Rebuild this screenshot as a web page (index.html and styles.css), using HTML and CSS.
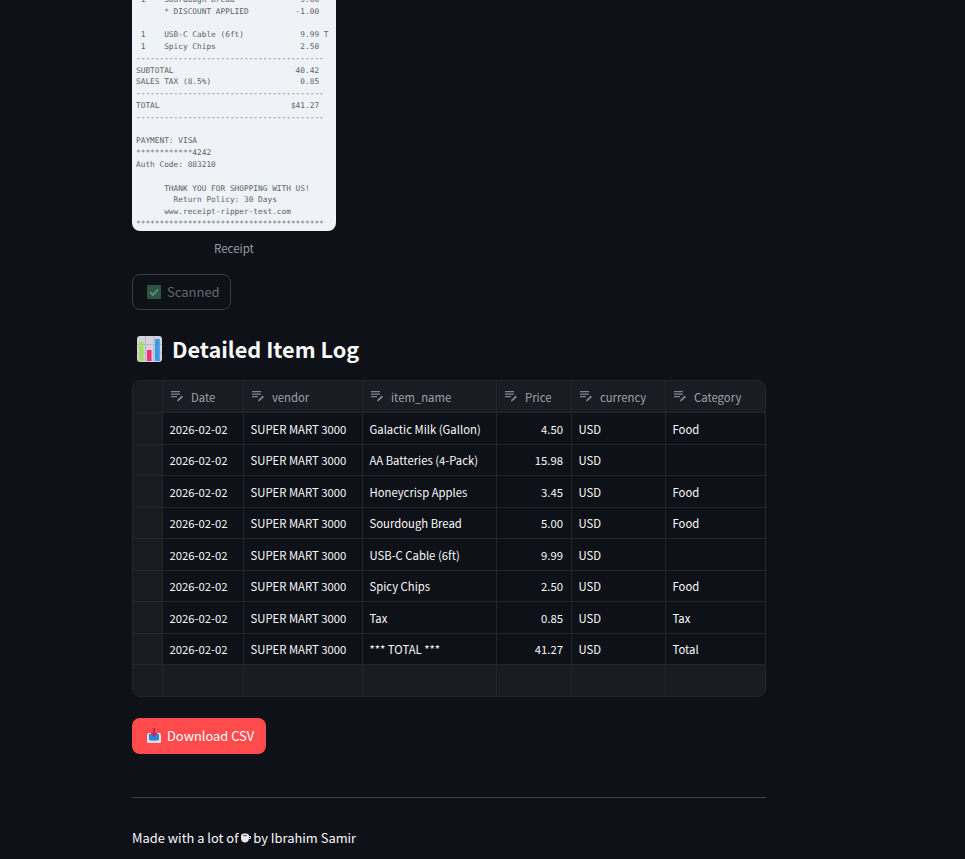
FILE: index.html
```html
<!DOCTYPE html>
<html lang="en">
<head>
<meta charset="utf-8">
<title>Receipt Ripper</title>
<link rel="stylesheet" href="styles.css">
</head>
<body>
<main class="page">
  <figure class="receipt">
    <div class="paper">
<pre class="paper-text"> 1    Sourdough Bread              5.00
      * DISCOUNT APPLIED          -1.00

 1    USB-C Cable (6ft)            9.99 T
 1    Spicy Chips                  2.50
----------------------------------------
SUBTOTAL                          40.42
SALES TAX (8.5%)                   0.85
----------------------------------------
TOTAL                            $41.27
----------------------------------------

PAYMENT: VISA
************4242
Auth Code: 883210

      THANK YOU FOR SHOPPING WITH US!
        Return Policy: 30 Days
      www.receipt-ripper-test.com
****************************************</pre>
    </div>
    <figcaption class="caption">Receipt</figcaption>
  </figure>

  <button class="btn-scanned" disabled>
    <svg class="check" viewBox="0 0 14 14" aria-hidden="true"><rect width="14" height="14" rx="1" fill="#2a5542"/><path d="M3 7.200 5.900 10 11 4.400" fill="none" stroke="#6f8c7e" stroke-width="1.600"/></svg>
    <span>Scanned</span>
  </button>

  <h2 class="heading">
    <svg class="chart" viewBox="0 0 25 26" aria-hidden="true">
      <rect width="25" height="26" rx="3" fill="#d5d2dc"/>
      <path d="M0 8.500h25M0 17h25M8.500 0v26M17 0v26" stroke="#b3b0bc" stroke-width=".8"/>
      <path d="M2 25V6h4.500v19z" fill="#a5e05a"/>
      <path d="M10 25V14h4.500v11z" fill="#ee2f78"/>
      <path d="M18 25V3h4.800v22z" fill="#3d9bee"/>
    </svg>
    <span>Detailed Item Log</span>
  </h2>

  <div class="table">
    <div class="cell head idx"></div>
    <div class="cell head"><svg class="edit"><use href="#pen"/></svg>Date</div>
    <div class="cell head"><svg class="edit"><use href="#pen"/></svg>vendor</div>
    <div class="cell head"><svg class="edit"><use href="#pen"/></svg>item_name</div>
    <div class="cell head"><svg class="edit"><use href="#pen"/></svg>Price</div>
    <div class="cell head"><svg class="edit"><use href="#pen"/></svg>currency</div>
    <div class="cell head last"><svg class="edit"><use href="#pen"/></svg>Category</div>

    <div class="cell idx"></div><div class="cell">2026-02-02</div><div class="cell">SUPER MART 3000</div><div class="cell">Galactic Milk (Gallon)</div><div class="cell num">4.50</div><div class="cell">USD</div><div class="cell last">Food</div>
    <div class="cell idx"></div><div class="cell">2026-02-02</div><div class="cell">SUPER MART 3000</div><div class="cell">AA Batteries (4-Pack)</div><div class="cell num">15.98</div><div class="cell">USD</div><div class="cell last"></div>
    <div class="cell idx"></div><div class="cell">2026-02-02</div><div class="cell">SUPER MART 3000</div><div class="cell">Honeycrisp Apples</div><div class="cell num">3.45</div><div class="cell">USD</div><div class="cell last">Food</div>
    <div class="cell idx"></div><div class="cell">2026-02-02</div><div class="cell">SUPER MART 3000</div><div class="cell">Sourdough Bread</div><div class="cell num">5.00</div><div class="cell">USD</div><div class="cell last">Food</div>
    <div class="cell idx"></div><div class="cell">2026-02-02</div><div class="cell">SUPER MART 3000</div><div class="cell">USB-C Cable (6ft)</div><div class="cell num">9.99</div><div class="cell">USD</div><div class="cell last"></div>
    <div class="cell idx"></div><div class="cell">2026-02-02</div><div class="cell">SUPER MART 3000</div><div class="cell">Spicy Chips</div><div class="cell num">2.50</div><div class="cell">USD</div><div class="cell last">Food</div>
    <div class="cell idx"></div><div class="cell">2026-02-02</div><div class="cell">SUPER MART 3000</div><div class="cell">Tax</div><div class="cell num">0.85</div><div class="cell">USD</div><div class="cell last">Tax</div>
    <div class="cell idx"></div><div class="cell">2026-02-02</div><div class="cell">SUPER MART 3000</div><div class="cell">*** TOTAL ***</div><div class="cell num">41.27</div><div class="cell">USD</div><div class="cell last">Total</div>

    <div class="cell add idx"></div><div class="cell add"></div><div class="cell add"></div><div class="cell add"></div><div class="cell add"></div><div class="cell add"></div><div class="cell add last"></div>
  </div>

  <button class="btn-download">
    <svg class="inbox" viewBox="0 0 14 15" aria-hidden="true">
      <path d="M1 5h12l1 2v7a1 1 0 0 1-1 1H1a1 1 0 0 1-1-1V7z" fill="#d9dbe6"/>
      <rect x="2" y="6" width="10" height="6" fill="#2d86d8"/>
      <path d="M4 12h6l1 1H3z" fill="#7fa9d2"/>
      <path d="M5.800 0h2.400v5H10.500L7 9 3.500 5h2.300z" fill="#cf2460"/>
    </svg>
    <span>Download CSV</span>
  </button>

  <hr class="rule">

  <p class="credit">Made with a lot of<svg class="cup" viewBox="0 0 11 10" aria-hidden="true"><path d="M1 2.500C1 1 3 .5 5 .5s4 .5 4 2v3C9 8 7 9.500 5 9.500S1 8 1 5.500z" fill="#e8e8e8"/><path d="M2.500 2.600c1-.7 4-.7 5 0-1 .7-4 .7-5 0z" fill="#5a4a44"/><path d="M9 3.500h1.500v2H8.500" fill="none" stroke="#e8e8e8"/></svg>by Ibrahim Samir</p>
</main>

<svg class="defs" aria-hidden="true">
  <symbol id="pen" viewBox="0 0 13 11">
    <path d="M0 .7h9M0 3.200h9M0 5.700h6" stroke="currentColor" stroke-width="1.300" fill="none"/>
    <path d="M6 10.500l.4-1.700L10.700 4.600l1.300 1.300-4.300 4.200z" fill="currentColor"/>
  </symbol>
</svg>
</body>
</html>
```

FILE: styles.css
```css
* { box-sizing: border-box; }

html, body {
  margin: 0;
  height: 859px;
  overflow: hidden;
  background: #0e1117;
}

body {
  color: #fafafa;
  font-family: "Noto Sans CJK SC", "Noto Sans", sans-serif;
}

.page {
  width: 634px;
  margin-left: 132px;
  display: flex;
  flex-direction: column;
  align-items: flex-start;
}

.receipt {
  margin: 0;
  width: 204px;
}

.paper {
  height: 231px;
  background: #eff3f8;
  border-radius: 0 0 8px 8px;
  overflow: hidden;
}

.paper-text {
  margin: -6px 0 0;
  padding-left: 4px;
  font-family: "DejaVu Sans Mono", monospace;
  font-size: 7.800px;
  line-height: 11.780px;
  color: #5c6066;
}

.caption {
  height: 21px;
  margin-top: 7px;
  text-align: center;
  font-size: 11.500px;
  line-height: 21px;
  color: #9a9ca3;
}

.btn-scanned {
  margin-top: 15px;
  height: 36px;
  width: 99px;
  padding: 0 0 0 14px;
  display: flex;
  align-items: center;
  gap: 6px;
  background: transparent;
  border: 1px solid #3a3c44;
  border-radius: 8px;
  color: #66686f;
  font: 13px/20px "Noto Sans CJK SC", sans-serif;
}

.check { width: 14px; height: 14px; flex: none; }

.heading {
  margin: 20px 0 0;
  height: 38px;
  display: flex;
  align-items: center;
  gap: 10px;
  padding-left: 5px;
  font-size: 21.700px;
  line-height: 38px;
  font-weight: 600;
}

.chart { width: 25px; height: 26px; flex: none; }

.table {
  margin-top: 12px;
  width: 634px;
  display: grid;
  grid-template-columns: 30px 81px 119px 134px 75px 94px 101px;
  grid-template-rows: 32.400px repeat(8, 31.500px) 31px;
  border: 1px solid #24262e;
  border-radius: 8px;
  overflow: hidden;
  font-size: 11.300px;
}

.cell {
  display: flex;
  align-items: center;
  padding: 0 8px 0 6.500px;
  min-width: 0;
  white-space: nowrap;
  border-right: 1px solid #24262e;
  border-bottom: 1px solid #24262e;
  color: #fafafa;
}

.last { border-right: 0; }

.head {
  background: #1a1c24;
  color: #9fa1a8;
  gap: 7px;
  padding-left: 8px;
}

.idx { background: #1a1c24; }
.add { background: #1a1c24; border-bottom: 0; }
.num { justify-content: flex-end; }

.edit { width: 13px; height: 11px; flex: none; color: #80828a; }
.defs { display: none; }

.btn-download {
  margin-top: 20.600px;
  height: 36px;
  width: 134px;
  padding: 0 0 0 15px;
  display: flex;
  align-items: center;
  gap: 6px;
  background: #ff4b4b;
  border: 0;
  border-radius: 8px;
  color: #fff;
  font: 12.900px/20px "Noto Sans CJK SC", sans-serif;
}

.inbox { width: 14px; height: 15px; flex: none; }

.rule {
  width: 100%;
  margin: 43px 0 0;
  border: 0;
  border-top: 1px solid #3d3f46;
}

.credit {
  margin: 30px 0 0;
  font-size: 12.900px;
  line-height: 20px;
  display: flex;
  align-items: center;
  white-space: pre;
}

.cup { width: 11px; height: 10px; margin: 0 2px; }
```
